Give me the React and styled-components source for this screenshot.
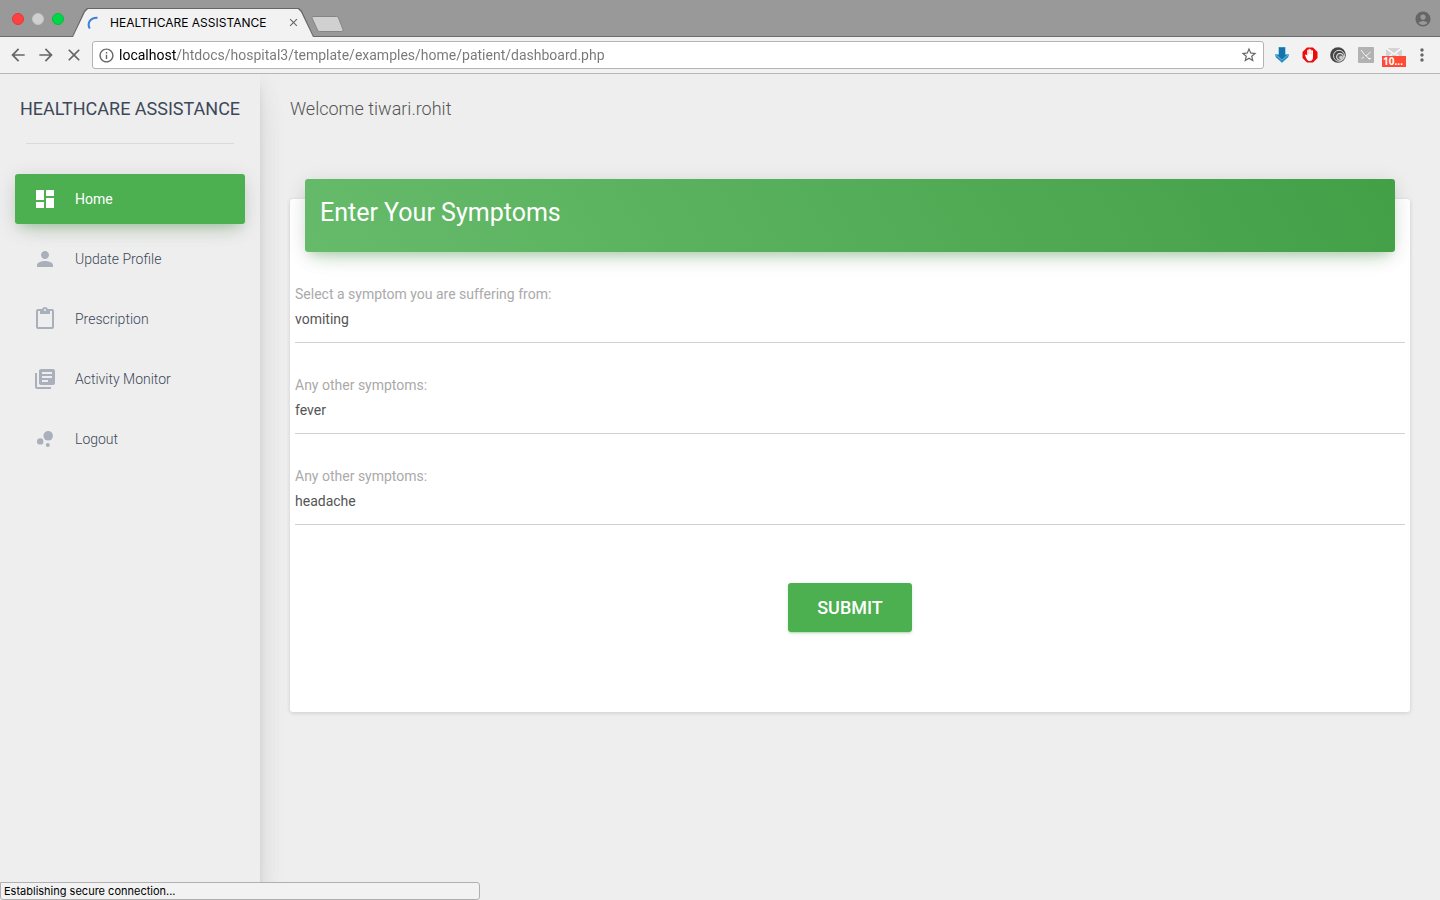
import React from "react";
import styled, { createGlobalStyle, css } from "styled-components";
import {
  MdArrowBack,
  MdArrowForward,
  MdClose,
  MdInfoOutline,
  MdStarBorder,
  MdMoreVert,
  MdAccountCircle,
  MdDashboard,
  MdPerson,
  MdContentPaste,
  MdLibraryBooks,
  MdBubbleChart,
} from "react-icons/md";

const GlobalStyle = createGlobalStyle`
  *, *::before, *::after { box-sizing: border-box; }
  body {
    margin: 0;
    background: #eee;
    color: #555;
    font-family: Roboto, "Liberation Sans", sans-serif;
    font-size: 14px;
    font-weight: 300;
    line-height: 20px;
  }
  button, input { font-family: inherit; }
`;

const Window = styled.div`
  display: flex;
  flex-direction: column;
  min-height: 100vh;
`;

const TabStrip = styled.div`
  display: flex;
  align-items: flex-end;
  height: 37px;
  background: #999;
  box-shadow: inset 0 -1px #6c6c6c;
`;

const WindowControls = styled.div`
  display: flex;
  align-self: center;
  gap: 8px;
  padding: 0 8px 0 12px;
`;

const ControlDot = styled.button`
  width: 12px;
  height: 12px;
  padding: 0;
  border: 1px solid ${(p) => p.$edge};
  border-radius: 50%;
  background: ${(p) => p.$color};
`;

const Tab = styled.div`
  position: relative;
  isolation: isolate;
  display: flex;
  align-items: center;
  width: 242px;
  height: 29px;
  padding: 0 14px 0 15px;
  color: #000;

  &::before,
  &::after {
    content: "";
    position: absolute;
    z-index: -1;
    inset: 0;
    background: #666;
    clip-path: polygon(0 100%, 12px 3px, 15px 0, calc(100% - 15px) 0, calc(100% - 12px) 3px, 100% 100%);
  }
  &::after {
    inset: 1px 1px 0;
    background: #f2f2f2;
  }
`;

const TabTitle = styled.span`
  flex: 1;
  margin-left: 10px;
  font: 400 12px/16px Inter, sans-serif;
  white-space: nowrap;
`;

const IconButton = styled.button`
  display: flex;
  align-items: center;
  justify-content: center;
  flex: none;
  width: ${(p) => p.$size || 20}px;
  height: ${(p) => p.$size || 20}px;
  padding: 0;
  border: 0;
  background: none;
  color: ${(p) => p.$color || "#666"};
`;

const NewTab = styled.button`
  align-self: center;
  width: 33px;
  height: 16px;
  margin: 10px 0 0 -3px;
  padding: 0;
  border: 0;
  background: none;

  svg { display: block; }
`;

const Profile = styled.div`
  align-self: center;
  margin: 0 8px 0 auto;
`;

const Toolbar = styled.div`
  display: flex;
  align-items: center;
  gap: 8px;
  height: 37px;
  padding: 0 8px;
  border-bottom: 1px solid #b6b6b6;
  background: #f2f2f2;
`;

const AddressBar = styled.div`
  display: flex;
  align-items: center;
  flex: 1;
  gap: 4px;
  height: 28px;
  padding: 0 4px;
  border: 1px solid #b4b4b4;
  border-radius: 3px;
  background: #fff;
`;

const AddressInput = styled.input`
  flex: 1;
  min-width: 0;
  height: 20px;
  padding: 0;
  border: 0;
  outline: 0;
  background: linear-gradient(to right, #000 58px, #777 58px);
  background-clip: text;
  color: transparent;
  font-size: 14px;
  font-weight: 400;
`;

const Extensions = styled.div`
  display: flex;
  align-items: center;
  gap: 8px;
`;

const MailButton = styled(IconButton)`
  position: relative;
`;

const Badge = styled.span`
  position: absolute;
  top: 11px;
  left: -2px;
  width: 24px;
  height: 11px;
  padding-left: 1px;
  background: #ff4b36;
  color: #fff;
  font: 700 10px/11px "Open Sans", sans-serif;
  text-align: left;
`;

const Page = styled.div`
  display: flex;
  flex: 1;
  overflow: hidden;
`;

const Sidebar = styled.aside`
  flex: none;
  width: 260px;
  padding: 0 15px;
  background: #eee;
  box-shadow: 0 16px 38px -12px rgba(0, 0, 0, 0.14), 0 4px 25px 0 rgba(0, 0, 0, 0.06),
    0 8px 10px -5px rgba(0, 0, 0, 0.2);
`;

const Brand = styled.a`
  display: block;
  margin: 0 11px;
  padding: 20px 0 19px;
  border-bottom: 1px solid #dadada;
  color: #3c4858;
  font-size: 18px;
  font-weight: 400;
  line-height: 30px;
  text-decoration: none;
  text-transform: uppercase;
  white-space: nowrap;
`;

const BrandText = styled.span`
  display: flex;
  justify-content: center;
`;

const Nav = styled.nav`
  display: flex;
  flex-direction: column;
  gap: 10px;
  padding-top: 30px;
`;

const NavLink = styled.a`
  display: flex;
  align-items: center;
  gap: 18px;
  height: 50px;
  padding: 0 18px;
  border-radius: 3px;
  color: #3c4858;
  text-decoration: none;

  svg { color: #a9afbb; }

  ${(p) =>
    p.$active &&
    css`
      background: #4caf50;
      box-shadow: 0 12px 20px -10px rgba(76, 175, 80, 0.28), 0 4px 20px 0 rgba(0, 0, 0, 0.12),
        0 7px 8px -5px rgba(76, 175, 80, 0.2);
      color: #fff;
      font-weight: 400;
      svg { color: #fff; }
    `}
`;

const Main = styled.main`
  flex: 1;
  min-width: 0;
  padding: 20px 30px;
`;

const Welcome = styled.h1`
  margin: 0 0 75px;
  font-size: 18px;
  font-weight: 300;
  line-height: 30px;
`;

const Card = styled.form`
  padding: 0 5px 80px;
  border-radius: 3px;
  background: #fff;
  box-shadow: 0 1px 4px 0 rgba(0, 0, 0, 0.14);
`;

const CardHeader = styled.header`
  position: relative;
  top: -20px;
  margin: 0 10px 12px;
  padding: 16px 15px 21px;
  border-radius: 3px;
  background: linear-gradient(60deg, #66bb6a, #43a047);
  box-shadow: 0 12px 20px -10px rgba(76, 175, 80, 0.28), 0 4px 20px 0 rgba(0, 0, 0, 0.12),
    0 7px 8px -5px rgba(76, 175, 80, 0.2);
  color: #fff;
`;

const CardTitle = styled.h2`
  margin: 0;
  font-size: 25px;
  font-weight: 400;
  line-height: 36px;
`;

const Field = styled.div`
  margin-bottom: 32px;
`;

const Label = styled.label`
  display: block;
  color: #aaa;
  font-weight: 400;
`;

const TextInput = styled.input`
  display: block;
  width: 100%;
  height: 39px;
  padding: 5px 0 13px;
  border: 0;
  border-bottom: 1px solid #d2d2d2;
  border-radius: 0;
  outline: 0;
  background: none;
  color: #555;
  font-size: 14px;
  font-weight: 400;
  line-height: 20px;
`;

const Actions = styled.div`
  display: flex;
  justify-content: center;
  padding-top: 26px;
`;

const SubmitButton = styled.button`
  height: 49px;
  padding: 0 29px;
  border: 0;
  border-radius: 3px;
  background: #4caf50;
  box-shadow: 0 2px 2px 0 rgba(76, 175, 80, 0.14), 0 3px 1px -2px rgba(76, 175, 80, 0.2),
    0 1px 5px 0 rgba(76, 175, 80, 0.12);
  color: #fff;
  font-size: 18px;
  font-weight: 500;
  text-transform: uppercase;
`;

const StatusBar = styled.div`
  position: fixed;
  bottom: 0;
  left: 0;
  width: 33.333%;
  height: 18px;
  padding: 0 3px;
  border: 1px solid #b0b0b0;
  border-radius: 0 3px 3px 3px;
  background: #f2f2f2;
  color: #000;
  font: 400 11px/16px Inter, sans-serif;
`;

const Spinner = () => (
  <svg width="13" height="14" viewBox="0 0 13 14" fill="none">
    <path d="M2.800 12.500C0 8 2.500 1.500 10.500 1.700" stroke="#3d7fd9" strokeWidth="2" />
  </svg>
);

const DownloadIcon = () => (
  <svg width="16" height="16" viewBox="0 0 16 16">
    <path d="M4.500 0h7v7H15v2l-7 7-7-7V7h3.500z" fill="#5bb2dc" />
    <path d="M5 .5h6v7.500h2l-5 4.500L3 8h2z" fill="#1674aa" />
    <path d="M2 9.500l6 5 6-5" fill="none" stroke="#2487bd" strokeWidth="1.200" />
  </svg>
);

const BlockIcon = () => (
  <svg width="16" height="16" viewBox="0 0 16 16">
    <path d="M5 .5h6L15.500 5v6L11 15.500H5L.5 11V5z" fill="#ed0b0b" />
    <path
      d="M3 8c.8-1 1.600-.5 2.200.5V3.500c0-1 1.300-1 1.300 0v-1c0-1 1.400-1 1.400 0v.5c0-1 1.500-1 1.500 0v1c0-1 1.600-1 1.600 0V10c0 2.500-1 4-3.300 4C5.300 14 4.500 12 3 8z"
      fill="#fff"
    />
    <path d="M6.500 3.500V7M8 3v4M9.500 4v3" stroke="#f4a0a0" strokeWidth=".4" />
  </svg>
);

const SwirlIcon = () => (
  <svg width="16" height="16" viewBox="0 0 16 16" fill="none">
    <circle cx="8" cy="8" r="7.800" fill="#454545" />
    <circle cx="9" cy="8.800" r="5.500" stroke="#ddd" />
    <circle cx="10" cy="9.800" r="3.500" fill="#666" stroke="#eee" />
    <circle cx="11" cy="10.500" r="1.800" fill="#ccc" />
  </svg>
);

const ToolIcon = () => (
  <svg width="16" height="16" viewBox="0 0 16 16" fill="none">
    <rect width="16" height="16" rx="1" fill="#b2b2b2" />
    <path d="M3 3l3.500 4.500L12 12.500M12.500 5L8 9M6 10l-2.500 1.500M10 11.500h3" stroke="#f4f4f4" />
  </svg>
);

const MailIcon = () => (
  <svg width="16" height="14" viewBox="0 0 16 14" fill="none">
    <rect width="16" height="13" fill="#d4d4d4" />
    <path d="M0 0l8 6 8-6M0 12l6-6M16 12l-6-6" stroke="#fafafa" strokeWidth="1.500" />
  </svg>
);

const NAV_ITEMS = [
  { label: "Home", icon: MdDashboard, active: true },
  { label: "Update Profile", icon: MdPerson },
  { label: "Prescription", icon: MdContentPaste },
  { label: "Activity Monitor", icon: MdLibraryBooks },
  { label: "Logout", icon: MdBubbleChart },
];

const FIELDS = [
  { id: "symptom-1", label: "Select a symptom you are suffering from:", value: "vomiting" },
  { id: "symptom-2", label: "Any other symptoms:", value: "fever" },
  { id: "symptom-3", label: "Any other symptoms:", value: "headache" },
];

export default function App() {
  return (
    <Window>
      <GlobalStyle />
      <TabStrip>
        <WindowControls>
          <ControlDot $color="#ff4141" $edge="#e73535" aria-label="Close window" />
          <ControlDot $color="#d0d0d0" $edge="#c4c4c4" aria-label="Minimize window" />
          <ControlDot $color="#00d746" $edge="#00c03c" aria-label="Zoom window" />
        </WindowControls>
        <Tab>
          <Spinner />
          <TabTitle>HEALTHCARE ASSISTANCE</TabTitle>
          <IconButton $size={14} aria-label="Close tab">
            <MdClose size={13} />
          </IconButton>
        </Tab>
        <NewTab aria-label="New tab">
          <svg width="33" height="16" viewBox="0 0 33 16">
            <path d="M2 .5h23.500q1.500 0 2 1.500l4.500 11.500q.5 2-1.500 2H8.500q-1.500 0-2-1.500L1 2Q.5.5 2 .5z" fill="#d0d0d0" stroke="#858585" />
          </svg>
        </NewTab>
        <Profile>
          <IconButton $size={18} aria-label="Profile">
            <MdAccountCircle size={18} />
          </IconButton>
        </Profile>
      </TabStrip>
      <Toolbar>
        <IconButton aria-label="Back"><MdArrowBack size={20} /></IconButton>
        <IconButton aria-label="Forward"><MdArrowForward size={20} /></IconButton>
        <IconButton aria-label="Stop loading"><MdClose size={20} /></IconButton>
        <AddressBar>
          <IconButton $size={18} aria-label="Site information"><MdInfoOutline size={17} /></IconButton>
          <AddressInput
            aria-label="Address"
            defaultValue="localhost/htdocs/hospital3/template/examples/home/patient/dashboard.php"
          />
          <IconButton aria-label="Bookmark"><MdStarBorder size={18} /></IconButton>
        </AddressBar>
        <Extensions>
          <IconButton aria-label="Downloads"><DownloadIcon /></IconButton>
          <IconButton aria-label="Ad blocker"><BlockIcon /></IconButton>
          <IconButton aria-label="Swirl extension"><SwirlIcon /></IconButton>
          <IconButton aria-label="Tools extension"><ToolIcon /></IconButton>
          <MailButton aria-label="Mail">
            <MailIcon />
            <Badge>10...</Badge>
          </MailButton>
          <IconButton aria-label="Menu"><MdMoreVert size={20} /></IconButton>
        </Extensions>
      </Toolbar>
      <Page>
        <Sidebar>
          <Brand href="#home"><BrandText>Healthcare Assistance</BrandText></Brand>
          <Nav>
            {NAV_ITEMS.map(({ label, icon: Icon, active }) => (
              <NavLink key={label} href="#" $active={active}>
                <Icon size={24} />
                {label}
              </NavLink>
            ))}
          </Nav>
        </Sidebar>
        <Main>
          <Welcome>Welcome tiwari.rohit</Welcome>
          <Card>
            <CardHeader>
              <CardTitle>Enter Your Symptoms</CardTitle>
            </CardHeader>
            {FIELDS.map((field) => (
              <Field key={field.id}>
                <Label htmlFor={field.id}>{field.label}</Label>
                <TextInput id={field.id} type="text" defaultValue={field.value} />
              </Field>
            ))}
            <Actions>
              <SubmitButton type="submit">Submit</SubmitButton>
            </Actions>
          </Card>
        </Main>
      </Page>
      <StatusBar role="status">Establishing secure connection...</StatusBar>
    </Window>
  );
}
